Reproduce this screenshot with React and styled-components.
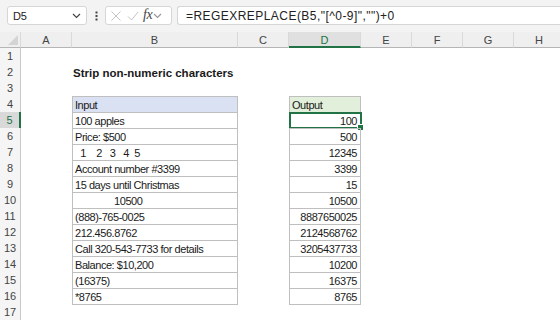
import React from "react";
import styled, { createGlobalStyle, css } from "styled-components";

const Global = createGlobalStyle`
  html, body { margin: 0; padding: 0; background: #fff; }
  body { width: 560px; height: 320px; overflow: hidden; font-family: "Liberation Sans", Arial, sans-serif; }
`;

const COLS = "21px 51px 166px 51px 72px 51px 51px 51px 51px";
const GREEN = "#217346";
const BORDER = "#bfbfbf";

const Toolbar = styled.div`
  display: flex;
  align-items: center;
  height: 32px;
  box-sizing: border-box;
  padding: 6px 0 7px 7px;
  background: #f3f3f3;
`;

const Box = styled.div`
  height: 19px;
  box-sizing: border-box;
  background: #fff;
  border: 1px solid #d6d6d6;
  border-radius: 3px;
  display: flex;
  align-items: center;
`;

const NameBox = styled(Box)`
  width: 80px;
  padding: 0 5px 0 5px;
  justify-content: space-between;
  font-size: 11px;
  color: #222;
  letter-spacing: -0.3px;
`;

const Dots = styled.div`
  width: 18px;
  display: flex;
  justify-content: center;
`;

const IconBox = styled(Box)`
  width: 67px;
  padding: 0 0 0 4px;
  margin-right: 5px;
`;

const Fx = styled.span`
  font-family: "Liberation Serif", "Times New Roman", serif;
  font-style: italic;
  font-size: 14px;
  color: #444;
  margin: 0 1px 2px 4px;
  letter-spacing: -0.5px;
`;

const FormulaBox = styled(Box)`
  flex: 1;
  border-right: none;
  border-radius: 3px 0 0 3px;
  padding-left: 8px;
  font-size: 12px;
  color: #222;
  white-space: pre;
  letter-spacing: 0.45px;
`;

const Sheet = styled.div`
  display: grid;
  grid-template-columns: ${COLS};
  grid-auto-rows: 16px;
  font-size: 11px;
  color: #1a1a1a;
`;

const ColHead = styled.div`
  box-sizing: border-box;
  height: 16px;
  background: ${(p) => (p.$active ? "#e0e0e0" : "#efefef")};
  border-bottom: ${(p) => (p.$active ? `2px solid ${GREEN}` : "1px solid #b5b5b5")};
  border-right: 1px solid #d9d9d9;
  color: ${(p) => (p.$active ? GREEN : "#444")};
  display: flex;
  align-items: center;
  justify-content: center;
  font-size: 11px;
  padding-top: ${(p) => (p.$active ? "1px" : "0")};
`;

const Corner = styled.div`
  box-sizing: border-box;
  height: 16px;
  background: #efefef;
  border-bottom: 1px solid #b5b5b5;
  border-right: 1px solid #d9d9d9;
  position: relative;
`;

const CornerTri = styled.div`
  position: absolute;
  right: 2px;
  bottom: 2px;
  width: 0;
  height: 0;
  border-left: 10px solid transparent;
  border-bottom: 10px solid #d4d4d4;
`;

const RowHead = styled.div`
  box-sizing: border-box;
  background: ${(p) => (p.$active ? "#d9d9d9" : "#f5f5f5")};
  border-right: ${(p) => (p.$active ? `2px solid ${GREEN}` : "1px solid #c8c8c8")};
  color: ${(p) => (p.$active ? GREEN : "#444")};
  display: flex;
  align-items: center;
  justify-content: center;
  font-size: 11px;
`;

const Cell = styled.div`
  box-sizing: border-box;
  white-space: pre;
  display: flex;
  align-items: center;
  padding: 1px 3px 0 2px;
  letter-spacing: -0.45px;
  position: relative;
  ${(p) =>
    p.$table &&
    css`
      border-top: 1px solid ${BORDER};
      border-left: 1px solid ${BORDER};
      border-right: 1px solid ${BORDER};
    `}
  ${(p) =>
    p.$last &&
    css`
      height: 17px;
      align-self: start;
      border-bottom: 1px solid ${BORDER};
    `}
  ${(p) => p.$right && css`justify-content: flex-end;`}
  ${(p) => p.$bg && css`background: ${p.$bg};`}
  ${(p) => p.$bold && css`font-weight: bold; font-size: 11.5px; letter-spacing: 0; padding-left: 1px;`}
`;

const Active = styled.div`
  position: absolute;
  left: -1px;
  top: -1px;
  right: -2px;
  bottom: -1px;
  border: 2px solid ${GREEN};
  pointer-events: none;
`;

const Handle = styled.div`
  position: absolute;
  right: -4px;
  bottom: -4px;
  width: 5px;
  height: 5px;
  background: ${GREEN};
  border: 1px solid #fff;
`;

const inputs = [
  "100 apples",
  "Price: $500",
  "  1    2   3   4  5",
  "Account number #3399",
  "15 days until Christmas",
  "               10500",
  "(888)-765-0025",
  "212.456.8762",
  "Call 320-543-7733 for details",
  "Balance: $10,200",
  "(16375)",
  "*8765",
];
const outputs = ["100", "500", "12345", "3399", "15", "10500", "8887650025", "2124568762", "3205437733", "10200", "16375", "8765"];

const letters = ["A", "B", "C", "D", "E", "F", "G", "H"];

function Chevron({ color = "#555" }) {
  return (
    <svg width="9" height="6" viewBox="0 0 9 6">
      <path d="M1 1 L4.5 4.5 L8 1" fill="none" stroke={color} strokeWidth="1.2" />
    </svg>
  );
}

export default function App() {
  const rows = [];
  for (let r = 1; r <= 17; r++) {
    let b = null;
    let d = null;
    if (r === 2) b = <Cell $bold>Strip non-numeric characters</Cell>;
    else if (r === 4) {
      b = <Cell $table $bg="#d9e1f2">Input</Cell>;
      d = <Cell $table $bg="#e2efda">Output</Cell>;
    } else if (r >= 5 && r <= 16) {
      const last = r === 16;
      b = <Cell $table $last={last}>{inputs[r - 5]}</Cell>;
      d = (
        <Cell $table $last={last} $right>
          {outputs[r - 5]}
          {r === 5 && (
            <Active>
              <Handle />
            </Active>
          )}
        </Cell>
      );
    }
    rows.push(
      <RowHead key={`h${r}`} $active={r === 5}>{r}</RowHead>,
      <Cell key={`a${r}`} />,
      b ? React.cloneElement(b, { key: `b${r}` }) : <Cell key={`b${r}`} />,
      <Cell key={`c${r}`} />,
      d ? React.cloneElement(d, { key: `d${r}` }) : <Cell key={`d${r}`} />,
      <Cell key={`e${r}`} />,
      <Cell key={`f${r}`} />,
      <Cell key={`g${r}`} />,
      <Cell key={`i${r}`} />
    );
  }

  return (
    <>
      <Global />
      <Toolbar>
        <NameBox>
          <span>D5</span>
          <Chevron color="#444" />
        </NameBox>
        <Dots>
          <svg width="3" height="10" viewBox="0 0 3 10">
            <rect x="0.5" y="0.5" width="2" height="2" fill="#444" />
            <rect x="0.5" y="4" width="2" height="2" fill="#444" />
            <rect x="0.5" y="7.5" width="2" height="2" fill="#444" />
          </svg>
        </Dots>
        <IconBox>
          <svg width="12" height="12" viewBox="0 0 12 12" style={{ marginRight: 5 }}>
            <path d="M1.5 1.5 L10.5 10.5 M10.5 1.5 L1.5 10.5" stroke="#c4c4c4" strokeWidth="1" fill="none" />
          </svg>
          <svg width="12" height="12" viewBox="0 0 12 12">
            <path d="M1 6.5 L4.5 10 L11 2" stroke="#c4c4c4" strokeWidth="1" fill="none" />
          </svg>
          <Fx>fx</Fx>
          <Chevron color="#999" />
        </IconBox>
        <FormulaBox>=REGEXREPLACE(B5,"[^0-9]","")+0</FormulaBox>
      </Toolbar>
      <Sheet>
        <Corner>
          <CornerTri />
        </Corner>
        {letters.map((l) => (
          <ColHead key={l} $active={l === "D"}>
            {l}
          </ColHead>
        ))}
        {rows}
      </Sheet>
    </>
  );
}
